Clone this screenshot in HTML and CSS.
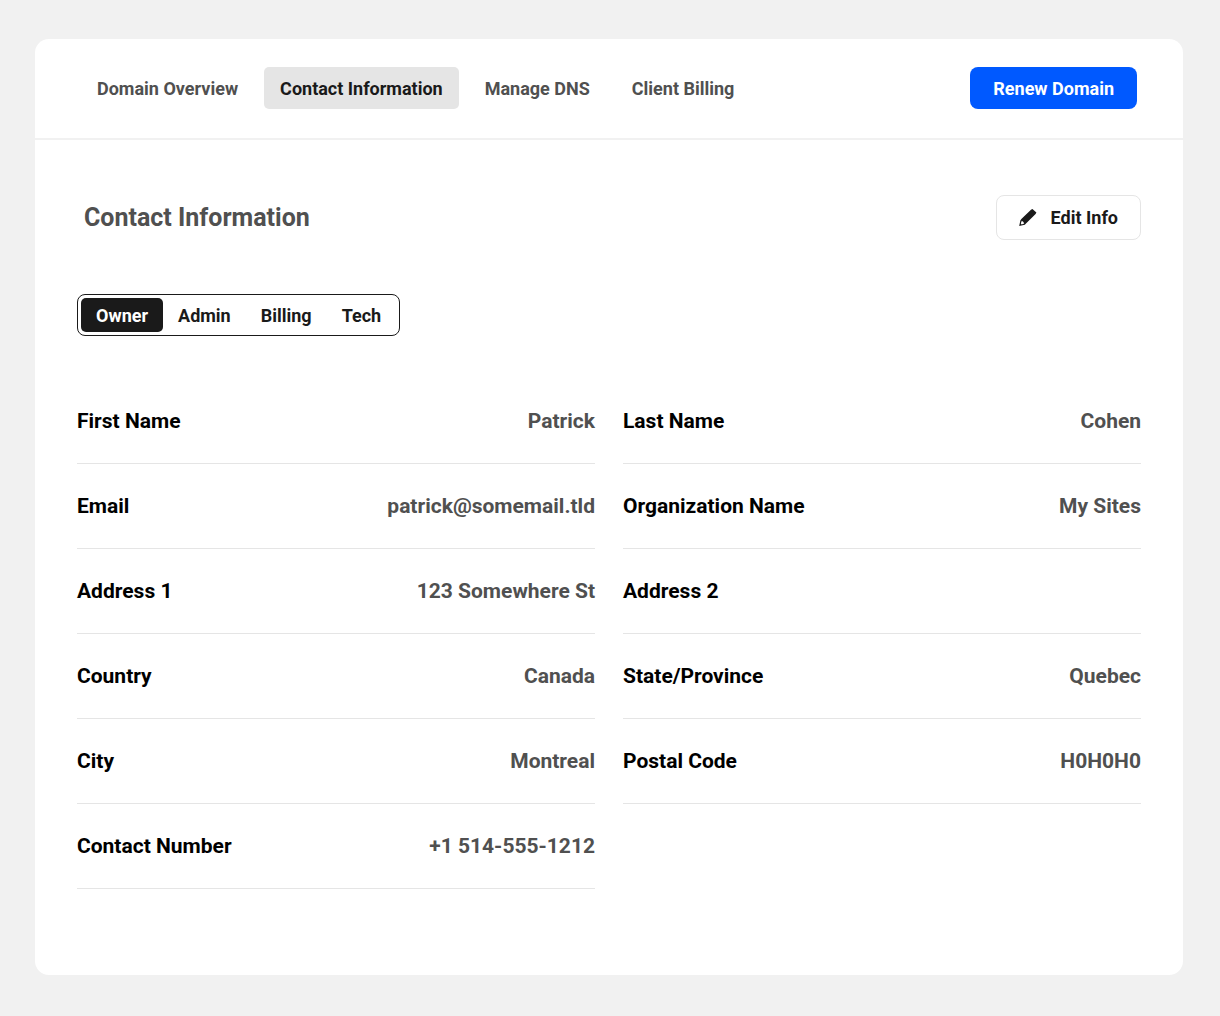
FILE: index.html
```html
<!DOCTYPE html>
<html lang="en">
<head>
    <meta charset="utf-8">
    <title>Contact Information</title>
    <link rel="stylesheet" href="styles.css">
</head>
<body>
    <main class="panel">
        <header class="panel-header">
            <nav class="nav">
                <a href="#overview" class="nav-link">Domain Overview</a>
                <a href="#contact" class="nav-link active">Contact Information</a>
                <a href="#dns" class="nav-link">Manage DNS</a>
                <a href="#billing" class="nav-link">Client Billing</a>
            </nav>
            <button type="button" class="btn btn-primary">Renew Domain</button>
        </header>
        <section class="panel-body">
            <div class="title-row">
                <h1>Contact Information</h1>
                <button type="button" class="btn btn-outline">
                    <svg class="icon" viewBox="0 0 18 18" aria-hidden="true">
                        <path fill-rule="evenodd" d="M13.4 0L17.4 3.6L16.6 5L7 14.6L5.8 15.8L0.2 17L1.4 11.2L2.6 9.8L12 0.8ZM2.8 11.8L1.8 14.6L2.7 15.4L5.2 14.5L4.4 12.9Z"/>
                    </svg>
                    Edit Info
                </button>
            </div>
            <div class="tabs">
                <button type="button" class="tab active">Owner</button>
                <button type="button" class="tab">Admin</button>
                <button type="button" class="tab">Billing</button>
                <button type="button" class="tab">Tech</button>
            </div>
            <dl class="details">
                <div class="detail"><dt>First Name</dt><dd>Patrick</dd></div>
                <div class="detail"><dt>Last Name</dt><dd>Cohen</dd></div>
                <div class="detail"><dt>Email</dt><dd>patrick@somemail.tld</dd></div>
                <div class="detail"><dt>Organization Name</dt><dd>My Sites</dd></div>
                <div class="detail"><dt>Address 1</dt><dd>123 Somewhere St</dd></div>
                <div class="detail"><dt>Address 2</dt><dd></dd></div>
                <div class="detail"><dt>Country</dt><dd>Canada</dd></div>
                <div class="detail"><dt>State/Province</dt><dd>Quebec</dd></div>
                <div class="detail"><dt>City</dt><dd>Montreal</dd></div>
                <div class="detail"><dt>Postal Code</dt><dd>H0H0H0</dd></div>
                <div class="detail"><dt>Contact Number</dt><dd>+1 514-555-1212</dd></div>
            </dl>
        </section>
    </main>
</body>
</html>
```
FILE: styles.css
```css
* {
    box-sizing: border-box;
}
body {
    margin: 0;
    padding: 39px 37px 41px 35px;
    background-color: #f1f1f1;
    font-family: Roboto, sans-serif;
    color: #1a1a1a;
}
.panel {
    background-color: #fff;
    border-radius: 14px;
}
.panel-header {
    display: flex;
    justify-content: space-between;
    align-items: center;
    padding: 28px 46px 29px;
    border-bottom: 2px solid #f1f1f1;
}
.nav {
    display: flex;
    gap: 10px;
}
.nav-link {
    padding: 11px 16px 10px;
    border-radius: 5px;
    font-size: 18px;
    font-weight: 700;
    line-height: 21px;
    color: #505050;
    text-decoration: none;
}
.nav-link.active {
    background-color: #e5e5e5;
    color: #1a1a1a;
}
.btn {
    display: flex;
    align-items: center;
    font-family: inherit;
    font-size: 18px;
    font-weight: 700;
    border-radius: 8px;
    cursor: pointer;
}
.btn-primary {
    height: 42px;
    padding: 0 23px;
    border: none;
    background-color: #0059ff;
    color: #fff;
}
.btn-outline {
    gap: 14px;
    height: 45px;
    padding: 0 22px;
    border: 1px solid #e5e5e5;
    background-color: #fff;
    color: #1a1a1a;
}
.icon {
    width: 18px;
    height: 18px;
    fill: #1a1a1a;
}
.panel-body {
    padding: 55px 42px 86px;
}
.title-row {
    display: flex;
    justify-content: space-between;
    align-items: center;
    padding-left: 7px;
}
h1 {
    margin: 0;
    font-size: 25px;
    font-weight: 700;
    color: #505050;
}
.tabs {
    display: inline-flex;
    margin-top: 54px;
    padding: 3px;
    border: 1px solid #1a1a1a;
    border-radius: 8px;
}
.tab {
    height: 34px;
    padding: 0 15px;
    border: none;
    border-radius: 5px;
    background: none;
    font-family: inherit;
    font-size: 18px;
    font-weight: 700;
    color: #1a1a1a;
    cursor: pointer;
}
.tab.active {
    background-color: #1a1a1a;
    color: #fff;
}
.details {
    display: grid;
    grid-template-columns: 1fr 1fr;
    column-gap: 28px;
    margin: 43px 0 0;
}
.detail {
    display: flex;
    justify-content: space-between;
    align-items: center;
    height: 85px;
    border-bottom: 1px solid #e5e5e5;
    font-size: 21px;
    font-weight: 700;
}
.detail dt {
    color: #000;
}
.detail dd {
    margin: 0;
    color: #505050;
}
```
